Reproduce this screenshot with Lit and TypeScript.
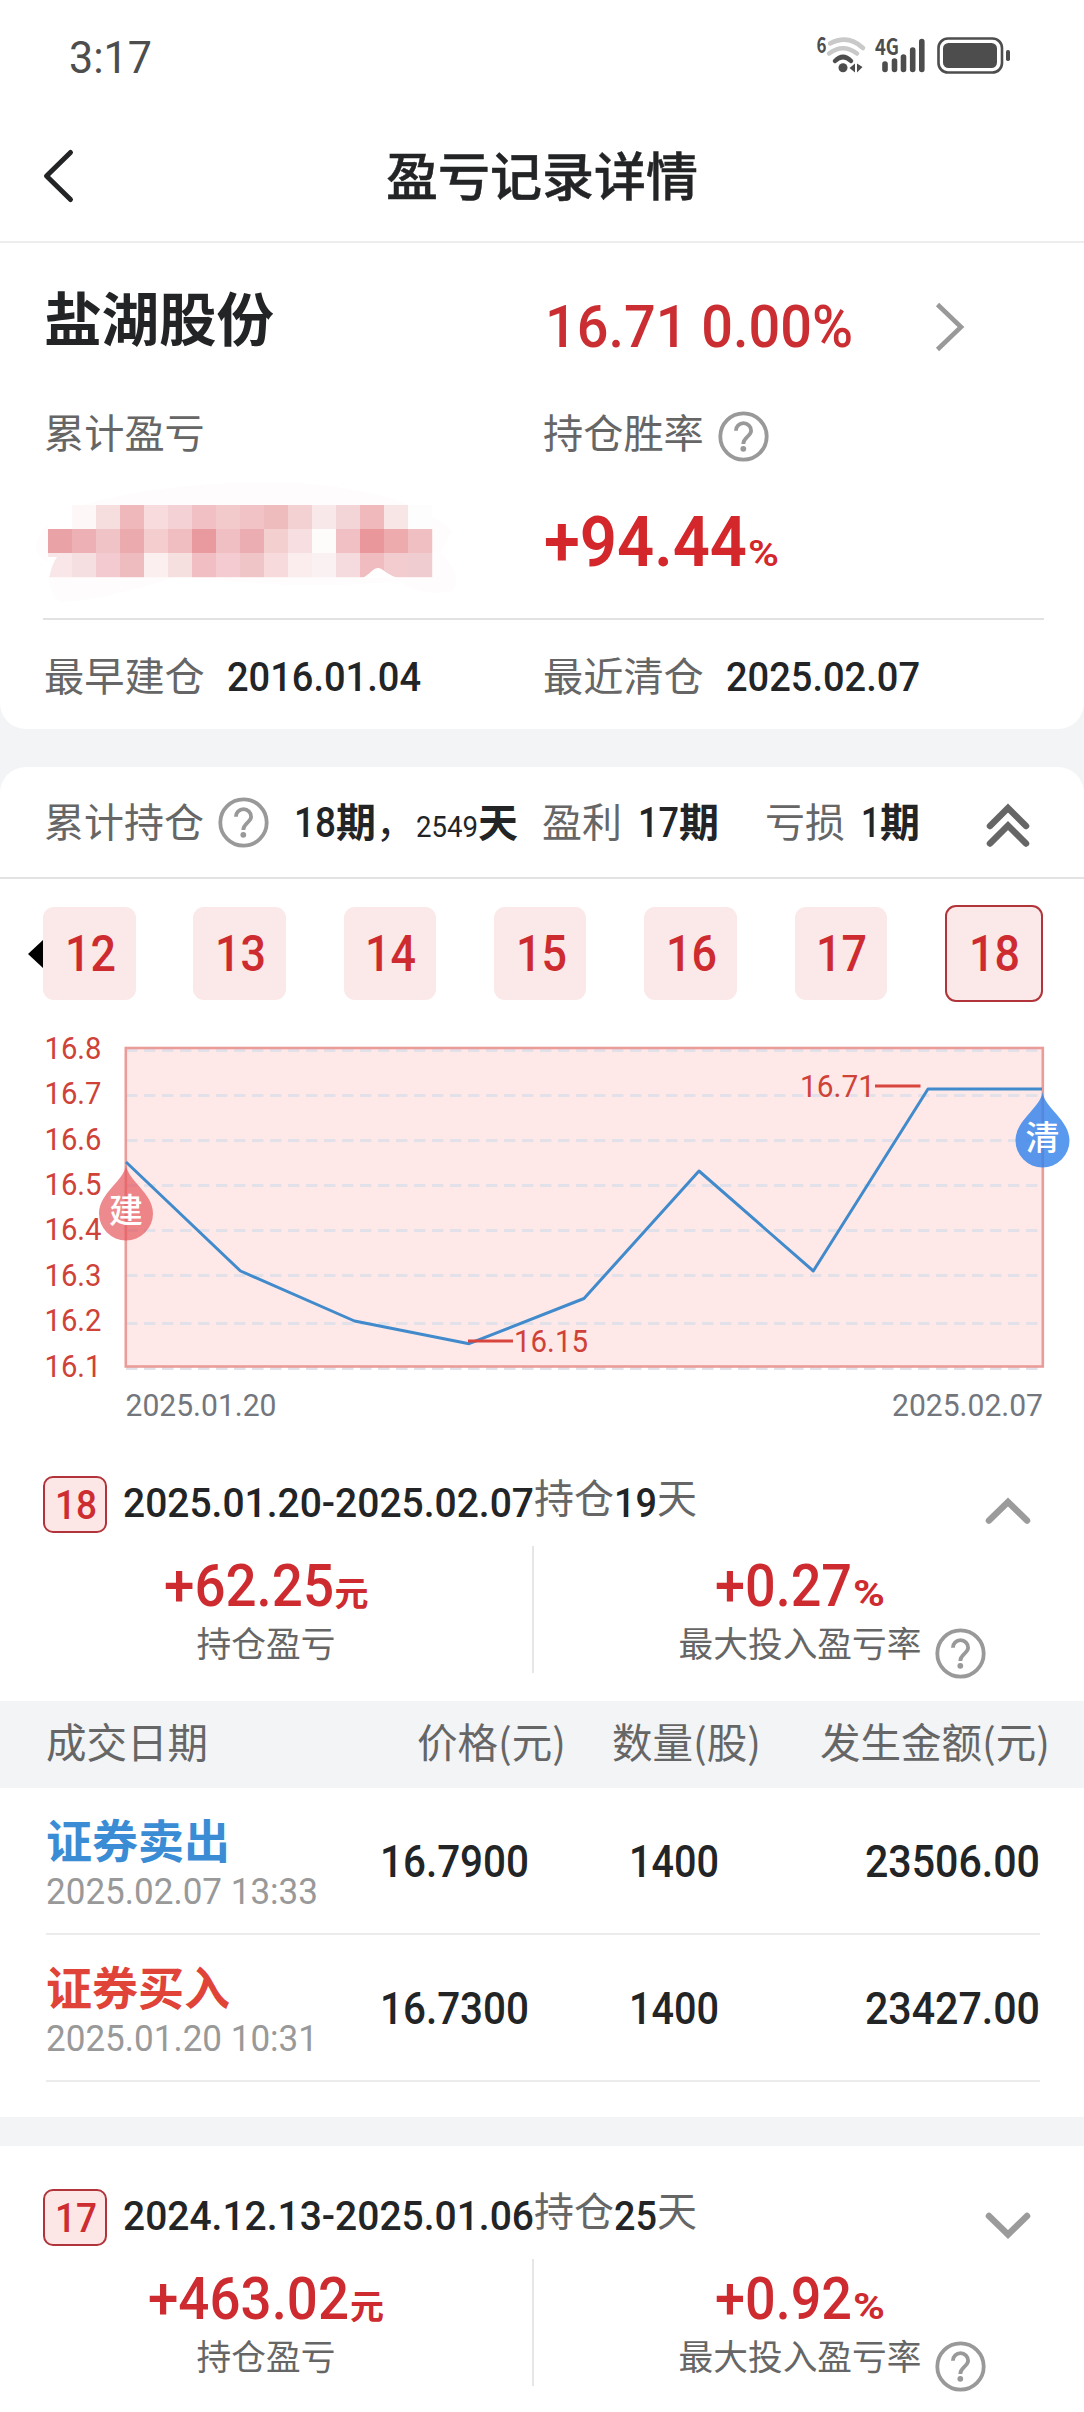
import { LitElement, html, svg, css } from "lit";
import { customElement, property } from "lit/decorators.js";
import { classMap } from "lit/directives/class-map.js";

const DIGITS = css`Roboto, "Noto Sans CJK SC", sans-serif`;
const HAN = css`"Noto Sans CJK SC", Roboto, sans-serif`;
const CAP_RATIO = 0.711;

/* A figure set by its cap height and run width; its bottom edge is the baseline. */
@customElement("num-text")
class NumText extends LitElement {
  @property() value = "";
  @property({ type: Number }) cap = 30;
  @property({ type: Number }) run = 100;
  static styles = css`
    :host { display: inline-block; line-height: 0; flex: none; }
    svg { display: inline-block; overflow: visible; vertical-align: baseline; }
    text { font-family: ${DIGITS}; font-weight: inherit; fill: currentColor; white-space: pre; }
  `;
  render() {
    return html`<svg width=${this.run} height=${this.cap}>
      <text x="0" y=${this.cap} font-size=${this.cap / CAP_RATIO} textLength=${this.run}
        lengthAdjust="spacingAndGlyphs">${this.value}</text>
    </svg>`;
  }
}

@customElement("help-icon")
class HelpIcon extends LitElement {
  static styles = css`:host { display: block; width: 51px; height: 51px; flex: none; } svg { display: block; }`;
  render() {
    return html`<svg width="51" height="51" viewBox="0 0 51 51" fill="none" stroke="#999" stroke-width="3.8">
      <circle cx="25.5" cy="25.5" r="23.2" />
      <path d="M17.9 19.8a7.6 7.6 0 0 1 15.2 0c0 5.6-7.8 6.2-7.8 13.2" />
      <circle cx="25.3" cy="37.8" r="2.9" fill="#999" stroke="none" />
    </svg>`;
  }
}

const MOSAIC = [
  ["#fff", "#fdf8f7", "#f6dede", "#efb8bb", "#f7dbdd", "#f4d1d4", "#f1c0c4", "#f3cacb", "#f1c3c6", "#efbcbe", "#f3d0d1", "#f8e8e9", "#f3d4d7", "#f0babd", "#f8e5e5", "#fefdfd"],
  ["#e9a2a6", "#edb0b4", "#f0c4c7", "#ebabae", "#f4cdcf", "#f0bdc1", "#e99a9f", "#f0bfc3", "#ebadb1", "#f4cfd0", "#f7dee1", "#fdfcfb", "#f1c0c4", "#ea979b", "#edabae", "#f0bfc1"],
  ["#f8e6e8", "#f6dfe1", "#f2cad0", "#eebcbf", "#fceff0", "#f6dfdf", "#f1bfc3", "#f4cbd1", "#f0c5c8", "#f6dadc", "#fbecee", "#faf1f3", "#f5dbdd", "#f1bcc0", "#f2cccf", "#efcccf"],
];

@customElement("masked-amount")
class MaskedAmount extends LitElement {
  static styles = css`:host { display: block; } svg { display: block; }`;
  render() {
    return html`<svg width="424" height="122" viewBox="36 482 424 122">
      <path fill="#fefcfc" d="M36 545Q38 525 70 508Q150 482 270 481Q400 484 452 530L440 552Q465 575 452 590Q420 596 400 580Q300 590 180 575Q100 600 60 601Q45 590 50 560Q38 560 36 545Z" />
      ${MOSAIC.map((row, r) => row.map((c, i) => svg`<rect x=${48 + i * 24} y=${504 + r * 24} width="24.2" height="24.2" fill=${c} />`))}
      <path fill="#fff" d="M48 556L57 556Q52 563 49 577L48 577Z" />
      <path fill="#fff" d="M363 577Q369 573 373 569Q378 565 383 569Q389 574 398 577Z" />
    </svg>`;
  }
}

const POINTS = [[126, 1162], [240.5, 1271], [354.5, 1321], [469, 1343.7], [584, 1298.5], [699, 1171], [813.3, 1271], [928, 1089], [1042, 1089]];
const LEVELS = [16.8, 16.7, 16.6, 16.5, 16.4, 16.3, 16.2, 16.1];
const GRID_Y = [1050.5, 1095.5, 1140.5, 1185.5, 1230.5, 1275.5, 1323.5, 1368.5];

@customElement("price-chart")
class PriceChart extends LitElement {
  static styles = css`
    :host { display: block; }
    svg { display: block; overflow: visible; }
    text { font-family: ${DIGITS}; font-size: 31px; }
    .red { fill: #cf4238; }
    .date { fill: #73777d; }
    .drop { font-family: ${HAN}; font-size: 34px; font-weight: 500; fill: #fff; }
  `;
  private fit(x: number, y: number, w: number, t: string, cls: string) {
    return svg`<text class=${cls} x=${x} y=${y} textLength=${w} lengthAdjust="spacingAndGlyphs">${t}</text>`;
  }
  private drop(x: number, y: number, fill: string, label: string) {
    return svg`<path transform="translate(${x - 27} ${y})" fill=${fill}
        d="M27 0C29 16 54 28 54 48.500A27 27 0 0 1 0 48.500C0 28 25 16 27 0Z" />
      <text class="drop" x=${x} y=${y + 57.5} text-anchor="middle">${label}</text>`;
  }
  render() {
    return html`<svg width="1084" height="403" viewBox="0 1030 1084 403">
      <rect x="125.500" y="1048" width="917.500" height="318.500" fill="#fee9e8" />
      ${GRID_Y.map((y) => svg`<path d="M126 ${y}H1040" stroke="#e2e1ea" stroke-width="3" stroke-dasharray="11.500 6.500" />`)}
      <rect x="125.800" y="1048" width="917" height="318.500" fill="none" stroke="#ea9c99" stroke-width="2.600" />
      ${LEVELS.map((v, i) => this.fit(44.5, 1058.7 + i * 45.4, 57, v.toFixed(1), "red"))}
      <polyline points=${POINTS.map((p) => p.join(",")).join(" ")} fill="none" stroke="#418acb" stroke-width="3" stroke-linejoin="round" />
      <path d="M875 1086H920.500M468 1341H513" stroke="#d8453c" stroke-width="3" />
      ${this.fit(800, 1097, 75, "16.71", "red")}
      ${this.fit(514, 1352, 74, "16.15", "red")}
      ${this.drop(126, 1165, "rgba(229,88,94,.7)", "建")}
      ${this.drop(1042.5, 1092, "rgba(52,130,234,.82)", "清")}
      ${this.fit(125.5, 1416, 151, "2025.01.20", "date")}
      ${this.fit(892, 1416, 151, "2025.02.07", "date")}
    </svg>`;
  }
}

interface Trade { side: "sell" | "buy"; label: string; time: string; timeRun: number; price: string; qty: string; total: string; }

@customElement("period-card")
class PeriodCard extends LitElement {
  @property() no = "";
  @property() range = "";
  @property() days = "";
  @property() profit = "";
  @property({ type: Number }) profitRun = 170;
  @property() rate = "";
  @property({ type: Boolean }) open = false;
  static styles = css`
    :host { display: block; color: #666; font-family: ${HAN}; }
    .head { display: flex; align-items: flex-start; height: 76px; padding: 37px 53px 0 43px; }
    .badge { box-sizing: border-box; display: flex; align-items: center; justify-content: center; width: 64px; height: 57px; margin: 6px 16px 0 0; padding-left: 1px;
      border: 2px solid #b0343a; border-radius: 10px; background: #fde6e6; color: #cd2d31; font-weight: 500; }
    .title { flex: 1; font-size: 40px; line-height: 60px; white-space: nowrap; }
    .title num-text { color: #222426; font-weight: 500; }
    .up { vertical-align: 4px; line-height: 1; }
    .arrow { display: block; margin-top: 27px; }
    .stats { display: flex; height: 127px; }
    .col { width: 532px; display: flex; flex-direction: column; align-items: center; }
    .col + .col { border-left: 2px solid #e6e6e6; }
    .value { display: flex; flex: none; align-items: baseline; gap: 1px; height: 53px; padding-top: 18px; line-height: 54px; font-size: 34px; font-weight: 700; color: #cd2b2f; }
    .value num-text { font-weight: 550; }
    .value .unit { font-weight: 700; }
    .label { display: flex; flex: none; align-items: flex-start; font-size: 34.700px; line-height: 50px; white-space: nowrap; }
    .label help-icon { margin: 11px -65px 0 14px; }
  `;
  render() {
    return html`
      <div class="head">
        <div class="badge"><num-text value=${this.no} cap="29" run="42"></num-text></div>
        <div class="title"><num-text value=${this.range} cap="29" run="411"></num-text><span class="up">持仓</span><num-text value=${this.days} cap="29" run="43"></num-text><span class="up">天</span></div>
        <svg class="arrow" width="48" height="30" viewBox="0 0 48 30" fill="none" stroke="#9b9b9b" stroke-width="6.500" stroke-linecap="round">
          <path d=${this.open ? "M6 23.500L25 5L44 23.500" : "M6 6L25 24.500L44 6"} />
        </svg>
      </div>
      <div class="stats">
        <div class="col">
          <div class="value"><num-text value=${this.profit} cap="42" run=${this.profitRun}></num-text>元</div>
          <div class="label">持仓盈亏</div>
        </div>
        <div class="col">
          <div class="value"><num-text value=${this.rate} cap="42" run="137"></num-text><num-text class="unit" value="%" cap="26" run="32"></num-text></div>
          <div class="label">最大投入盈亏率<help-icon></help-icon></div>
        </div>
      </div>`;
  }
}

@customElement("app-root")
class AppRoot extends LitElement {
  static styles = css`
    :host { display: block; width: 1084px; height: 2412px; overflow: hidden; background: #f3f4f6; color: #666; font: 40.200px/60px ${HAN}; white-space: nowrap; }
    svg { display: block; flex: none; }
    .status { box-sizing: border-box; display: flex; align-items: flex-start; justify-content: space-between; height: 113px; padding: 41px 70px 0 69px; background: #fff; color: #4d4d4d; }
    .signals { margin-top: -7px; overflow: visible; }
    .signals text { font-family: ${HAN}; font-weight: 700; fill: #4d4d4d; }
    .nav { display: grid; grid-template-columns: 1fr auto 1fr; align-items: center; height: 128px; border-bottom: 2px solid #ededed; background: #fff; }
    .nav svg { margin: 0 0 2px 40px; }
    .nav h1 { margin: 0; padding-bottom: 7px; font-size: 52px; font-weight: 500; color: #222426; -webkit-text-stroke: .5px #222426; }
    .summary { height: 486px; border-radius: 0 0 26px 26px; background: #fff; }
    .row { display: grid; grid-template-columns: 499px 1fr; align-items: start; padding-left: 44px; }
    .dates { align-items: baseline; }
    .quote { height: 125px; padding-top: 33px; }
    .name { font-size: 57.500px; line-height: 80px; font-weight: 700; color: #222426; }
    .price { display: flex; align-items: flex-start; margin: 29px 0 0 2px; color: #cb2e32; font-weight: 500; }
    .price svg { margin: -3px 0 0 80px; }
    .help { display: flex; align-items: flex-start; }
    .help help-icon { margin: 10px 0 0 14px; }
    .totals { height: 156px; }
    .totals masked-amount { margin: 21px 0 0 -8px; }
    .win { display: flex; align-items: baseline; gap: 1px; margin: 54px 0 0 1px; color: #d3272b; font-weight: 600; line-height: 0; }
    .rule { height: 2px; margin: 0 40px 0 43px; background: #e2e2e2; }
    .dates { padding-top: 24px; }
    .pair { display: flex; align-items: baseline; gap: 22px; }
    .dark { color: #222426; font-weight: 500; }
    .bold { color: #222426; font-weight: 700; }
    .comma { color: #222426; }
    .periods { margin-top: 38px; border-radius: 26px 26px 0 0; background: #fff; }
    .overview { display: flex; align-items: baseline; height: 110px; padding: 0 52px 0 44px; line-height: 107px; border-bottom: 2px solid #e3e3e3; font-size: 40px; }
    .overview help-icon { align-self: center; margin: 0 25px 0 14px; }
    .overview .icon { align-self: center; margin: 5px 0 0 auto; }
    .g1 { margin-left: 24px; }
    .g2 { margin-left: 16px; }
    .g3 { margin-left: 46px; }
    .small { font-weight: 400; }
    .tabs { display: flex; align-items: center; height: 97px; padding: 26px 41px 28px 28px; }
    .list { flex: 1; display: flex; align-items: center; justify-content: space-between; }
    .tab { box-sizing: border-box; display: flex; align-items: center; justify-content: center; width: 92.500px; height: 93px; padding-left: 2px; border-radius: 11px; background: #fbe8e8; color: #cd2b2f; font-weight: 500; }
    .tab.on { width: 98px; height: 97px; border: 2px solid #b0343a; }
    .thead { display: grid; grid-template-columns: 371px 195px 208px 1fr; height: 87px; margin-top: 28px; padding-left: 46px; background: #f2f4f6; font-size: 40.500px; line-height: 79px; }
    .trade { display: grid; grid-template-columns: 334px 249px 88px 1fr; align-items: start; height: 145px; margin: 0 44px 0 46px; border-bottom: 2px solid #ececec; }
    .trade > num-text { margin-top: 58px; }
    .trade > :last-child { justify-self: end; }
    .what { padding-top: 20px; font-size: 46px; font-weight: 700; color: #3a8cd4; }
    .what.buy { color: #e04438; }
    .when { display: flex; margin-top: 10px; color: #999; font-weight: 400; }
    .tail { height: 35px; }
    .next { margin-top: 29px; height: 266px; background: #fff; }
  `;

  private trades: Trade[] = [
    { side: "sell", label: "证券卖出", time: "2025.02.07 13:33", timeRun: 272, price: "16.7900", qty: "1400", total: "23506.00" },
    { side: "buy", label: "证券买入", time: "2025.01.20 10:31", timeRun: 272, price: "16.7300", qty: "1400", total: "23427.00" },
  ];

  private signals() {
    return html`<svg class="signals" width="200" height="44" viewBox="814 34 200 44" fill="none" stroke-linecap="round">
      <text x="816.500" y="53" font-size="22" textLength="10" lengthAdjust="spacingAndGlyphs">6</text>
      <g stroke-width="4.500">
        <path d="M830 43.500Q848 34 863 48" stroke="#c9c9c9" />
        <path d="M829 53.500Q843 43 857 53.500" stroke="#c9c9c9" />
        <path d="M835 61Q843 53 851 61" stroke="#4d4d4d" />
      </g>
      <circle cx="843" cy="67.800" r="4.500" fill="#4d4d4d" />
      <path d="M849.500 68L855 63.500V72.500ZM857 63.500L862.500 67L857 72.500Z" fill="#4d4d4d" />
      <text x="875" y="55" font-size="22" textLength="24" lengthAdjust="spacingAndGlyphs">4G</text>
      <path d="M885 64V69.500M894.500 61V69.500M903.500 57V69.500M912.700 50V69.500M921.800 41.500V69.500" stroke="#4d4d4d" stroke-width="5.600" />
      <rect x="938.500" y="38.500" width="63.500" height="34" rx="9.500" stroke="#4d4d4d" stroke-width="2.600" />
      <rect x="943" y="43" width="54" height="25" rx="5.500" fill="#4d4d4d" />
      <rect x="1006" y="50" width="4" height="11" rx="1.800" fill="#4d4d4d" />
    </svg>`;
  }

  render() {
    return html`
      <div class="status"><num-text value="3:17" cap="32" run="83"></num-text>${this.signals()}</div>
      <div class="nav">
        <svg width="36" height="56" viewBox="40 148 36 56" fill="none" stroke="#222426" stroke-width="5" stroke-linecap="round" stroke-linejoin="round"><path d="M70.500 152.500L46.500 176L70.500 199.500" /></svg>
        <h1>盈亏记录详情</h1>
      </div>
      <div class="summary">
        <div class="row quote">
          <div class="name">盐湖股份</div>
          <div class="price"><num-text value="16.71 0.00%" cap="42" run="308"></num-text>
            <svg width="34" height="50" viewBox="933 302 34 50" fill="none" stroke="#999" stroke-width="4.600"><path d="M937.500 304.500L961 327L937.500 349.500" /></svg>
          </div>
        </div>
        <div class="row">
          <div>累计盈亏</div>
          <div class="help">持仓胜率<help-icon></help-icon></div>
        </div>
        <div class="row totals">
          <masked-amount></masked-amount>
          <div class="win"><num-text value="+94.44" cap="50" run="203"></num-text><num-text class="bold-unit" value="%" cap="26" run="31"></num-text></div>
        </div>
        <div class="rule"></div>
        <div class="row dates">
          <div class="pair">最早建仓<num-text class="dark" value="2016.01.04" cap="29" run="194"></num-text></div>
          <div class="pair">最近清仓<num-text class="dark" value="2025.02.07" cap="29" run="194"></num-text></div>
        </div>
      </div>
      <div class="periods">
        <div class="overview">
          <span>累计持仓</span><help-icon></help-icon>
          <num-text class="dark" value="18" cap="30" run="42"></num-text><span class="bold">期</span><span class="comma">，</span>
          <num-text class="dark small" value="2549" cap="21" run="62"></num-text><span class="bold">天</span>
          <span class="g1">盈利</span><num-text class="dark g2" value="17" cap="30" run="41"></num-text><span class="bold">期</span>
          <span class="g3">亏损</span><num-text class="dark g2" value="1" cap="30" run="19"></num-text><span class="bold">期</span>
          <svg class="icon" width="48" height="46" viewBox="984 801 48 46" fill="none" stroke="#666" stroke-width="6.500" stroke-linecap="round"><path d="M990 825L1008 807L1026 825M990 842.500L1008 824.500L1026 842.500" /></svg>
        </div>
        <div class="tabs">
          <svg width="15" height="28" viewBox="0 0 15 28"><path d="M0 14L15 0V28Z" /></svg>
          <div class="list">
            ${["12", "13", "14", "15", "16", "17", "18"].map((n) => html`<div class=${classMap({ tab: true, on: n === "18" })}><num-text value=${n} cap="35" run="51"></num-text></div>`)}
          </div>
        </div>
        <price-chart></price-chart>
        <period-card no="18" range="2025.01.20-2025.02.07" days="19" profit="+62.25" .profitRun=${170} rate="+0.27" open></period-card>
        <div class="thead"><span>成交日期</span><span>价格(元)</span><span>数量(股)</span><span>发生金额(元)</span></div>
        ${this.trades.map((t) => html`<div class="trade">
          <div>
            <div class=${classMap({ what: true, buy: t.side === "buy" })}>${t.label}</div>
            <div class="when"><num-text value=${t.time} cap="26" .run=${t.timeRun}></num-text></div>
          </div>
          <num-text class="dark" value=${t.price} cap="31" run="149"></num-text>
          <num-text class="dark" value=${t.qty} cap="31" run="90"></num-text>
          <num-text class="dark" value=${t.total} cap="31" run="175"></num-text>
        </div>`)}
        <div class="tail"></div>
      </div>
      <div class="next">
        <period-card no="17" range="2024.12.13-2025.01.06" days="25" profit="+463.02" .profitRun=${201} rate="+0.92"></period-card>
      </div>`;
  }
}
